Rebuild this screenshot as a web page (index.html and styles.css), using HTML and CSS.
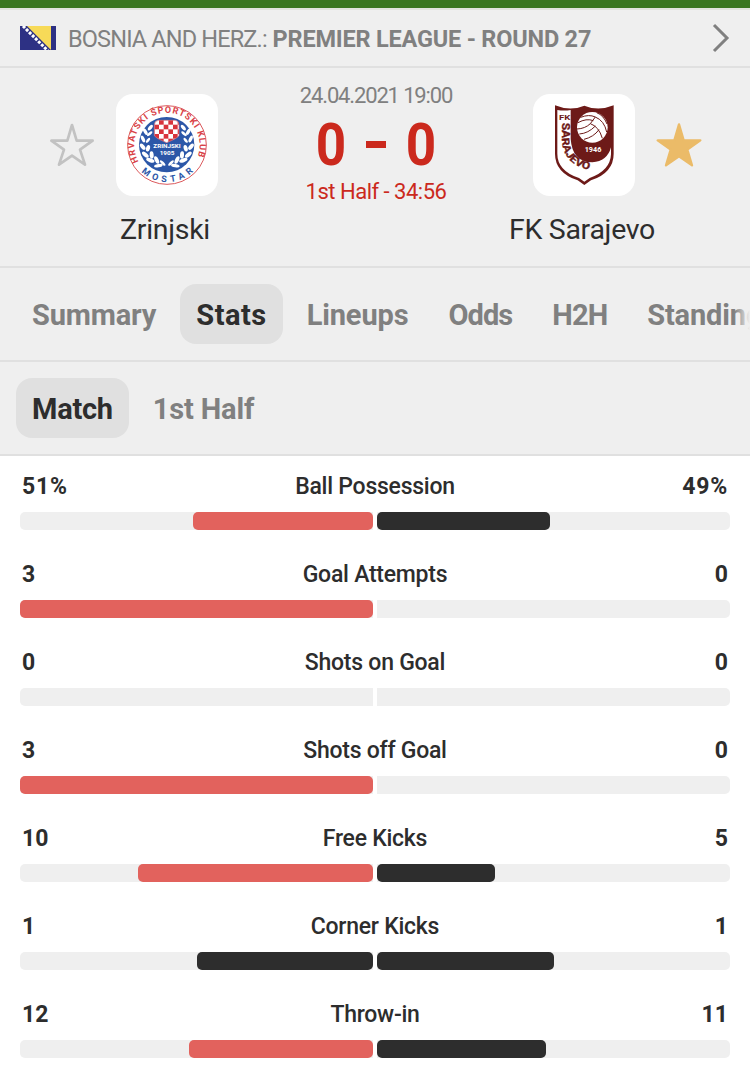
FILE: index.html
```html
<!DOCTYPE html>
<html lang="en">
  <head>
    <meta charset="UTF-8" />
    <meta name="viewport" content="width=device-width, initial-scale=1.0" />
    <title>Zrinjski - FK Sarajevo</title>
    <link rel="stylesheet" href="styles.css">
  </head>
  <body>
    <div class="top-line"></div>

    <header class="league">
      <svg class="flag" viewBox="0 0 36 24">
        <rect width="36" height="24" fill="#2d3184" />
        <path d="M7 0H31V24Z" fill="#f7da58" />
        <path d="M3 0L28 25" stroke="#fff" stroke-width="3" stroke-dasharray="2.9 1.4" />
      </svg>
      <div class="league-name">
        <span class="country">BOSNIA AND HERZ.:</span>
        <span class="round">PREMIER LEAGUE - ROUND 27</span>
      </div>
      <svg class="arrow" viewBox="0 0 18 30">
        <path d="M2 2L15 15L2 28" />
      </svg>
    </header>

    <section class="match">
      <svg class="star" viewBox="0 0 210 210">
        <path d="M96 45L110 92L158 92L120 119L135 164L96 137L57 164L72 119L34 92L82 92Z" />
      </svg>

      <div class="team">
        <div class="crest">
          <svg viewBox="18 18 306 306">
            <defs>
              <path id="ringTop" d="M86 221A98 98 0 1 1 256 221" />
              <path id="ringBottom" d="M91 249A112 112 0 0 0 251 249" />
              <pattern id="checks" x="133" y="110" width="28" height="28" patternUnits="userSpaceOnUse">
                <rect width="28" height="28" fill="#fff" />
                <rect width="14" height="14" fill="#d8333b" />
                <rect x="14" y="14" width="14" height="14" fill="#d8333b" />
              </pattern>
            </defs>
            <circle cx="171" cy="171" r="118" fill="#fff" stroke="#dc5a5d" stroke-width="3" />
            <circle cx="170" cy="170" r="83" fill="#2c57a8" />
            <g fill="#fff">
              <ellipse cx="121" cy="119" rx="5" ry="10" transform="rotate(40 121 119)" />
              <ellipse cx="106" cy="131" rx="5" ry="11" transform="rotate(-30 106 131)" />
              <ellipse cx="119" cy="137" rx="4" ry="10" transform="rotate(50 119 137)" />
              <ellipse cx="99" cy="153" rx="5" ry="11" transform="rotate(-25 99 153)" />
              <ellipse cx="114" cy="157" rx="4" ry="9" transform="rotate(40 114 157)" />
              <ellipse cx="98" cy="176" rx="6" ry="11" transform="rotate(-40 98 176)" />
              <ellipse cx="114" cy="181" rx="6" ry="10" transform="rotate(15 114 181)" />
              <ellipse cx="106" cy="200" rx="6" ry="12" transform="rotate(-50 106 200)" />
              <ellipse cx="125" cy="201" rx="6" ry="11" transform="rotate(-5 125 201)" />
              <ellipse cx="121" cy="217" rx="6" ry="13" transform="rotate(-70 121 217)" />
              <ellipse cx="140" cy="216" rx="6" ry="12" transform="rotate(-25 140 216)" />
              <ellipse cx="145" cy="233" rx="5" ry="13" transform="rotate(-100 145 233)" />
              <ellipse cx="158" cy="225" rx="4" ry="11" transform="rotate(-45 158 225)" />
              <ellipse cx="220" cy="119" rx="5" ry="10" transform="rotate(-40 220 119)" />
              <ellipse cx="235" cy="131" rx="5" ry="11" transform="rotate(30 235 131)" />
              <ellipse cx="222" cy="137" rx="4" ry="10" transform="rotate(-50 222 137)" />
              <ellipse cx="242" cy="153" rx="5" ry="11" transform="rotate(25 242 153)" />
              <ellipse cx="227" cy="157" rx="4" ry="9" transform="rotate(-40 227 157)" />
              <ellipse cx="243" cy="176" rx="6" ry="11" transform="rotate(40 243 176)" />
              <ellipse cx="227" cy="181" rx="6" ry="10" transform="rotate(-15 227 181)" />
              <ellipse cx="235" cy="200" rx="6" ry="12" transform="rotate(50 235 200)" />
              <ellipse cx="216" cy="201" rx="6" ry="11" transform="rotate(5 216 201)" />
              <ellipse cx="220" cy="217" rx="6" ry="13" transform="rotate(70 220 217)" />
              <ellipse cx="201" cy="216" rx="6" ry="12" transform="rotate(25 201 216)" />
              <ellipse cx="196" cy="233" rx="5" ry="13" transform="rotate(100 196 233)" />
              <ellipse cx="183" cy="225" rx="4" ry="11" transform="rotate(45 183 225)" />
            </g>
            <path d="M133 110Q134 98 145 97H195Q206 98 207 110V142Q205 150 170 164Q135 150 133 142Z" fill="url(#checks)" stroke="#e5747a" stroke-width="2" />
            <rect x="126" y="165" width="92" height="18" fill="#2c57a8" />
            <text class="crest-name" x="171" y="180" textLength="82" lengthAdjust="spacingAndGlyphs">ZRINJSKI</text>
            <text class="crest-year" x="171" y="202" textLength="44" lengthAdjust="spacingAndGlyphs">1905</text>
            <text class="ring-text red"><textPath href="#ringTop" textLength="392">HRVATSKI ŠPORTSKI KLUB</textPath></text>
            <text class="ring-text blue"><textPath href="#ringBottom" startOffset="4" textLength="172">MOSTAR</textPath></text>
          </svg>
        </div>
        <div class="team-name">Zrinjski</div>
      </div>

      <div class="score-box">
        <div class="date">24.04.2021 19:00</div>
        <div class="score"><span>0</span><i></i><span>0</span></div>
        <div class="status">1st Half - 34:56</div>
      </div>

      <div class="team">
        <div class="crest">
          <svg viewBox="18 18 306 306">
            <defs>
              <path id="curve" d="M105 104V154Q108 238 208 249" />
            </defs>
            <path d="M84 52Q130 71 172 53Q214 71 260 52V197Q260 254 192 277L172 291L152 277Q84 254 84 197Z" fill="#6d1a18" />
            <path d="M91 66Q112 69 131 66V153Q136 223 196 223Q241 220 252 178V199Q250 248 188 270L172 281L156 270Q91 248 91 197Z" fill="#fff" />
            <circle cx="196" cy="118" r="46" fill="#fff" />
            <g fill="none" stroke="#6d1a18" stroke-width="3">
              <path d="M161 88Q186 78 205 87M153 104Q178 90 199 98" />
              <path d="M205 87Q232 98 239 132M190 107Q216 116 226 151M205 87L190 107" />
              <path d="M150 123Q174 122 190 107M157 138Q184 136 205 114M171 154Q200 147 216 125" />
              <path d="M209 74Q230 82 240 108" />
            </g>
            <text class="fk" x="96" y="95" textLength="34" lengthAdjust="spacingAndGlyphs">FK</text>
            <text class="sarajevo"><textPath href="#curve" textLength="184" lengthAdjust="spacingAndGlyphs">SARAJEVO</textPath></text>
            <text class="year" x="198" y="191" textLength="50" lengthAdjust="spacingAndGlyphs">1946</text>
          </svg>
        </div>
        <div class="team-name">FK Sarajevo</div>
      </div>

      <svg class="star active" viewBox="0 0 210 210">
        <path d="M99 43L113 91L163 91L124 119L138 166L99 139L60 166L74 119L35 91L85 91Z" />
      </svg>
    </section>

    <nav class="tabs main-tabs">
      <a class="tab">Summary</a>
      <a class="tab selected">Stats</a>
      <a class="tab">Lineups</a>
      <a class="tab narrow">Odds</a>
      <a class="tab narrow">H2H</a>
      <a class="tab">Standings</a>
    </nav>

    <nav class="tabs sub-tabs">
      <a class="tab selected">Match</a>
      <a class="tab">1st Half</a>
    </nav>

    <main class="stats">
      <div class="stat">
        <div class="values percent"><b>51%</b><span>Ball Possession</span><b>49%</b></div>
        <div class="bars">
          <div class="bar home"><div class="fill red" style="width: 51%"></div></div>
          <div class="bar"><div class="fill" style="width: 49%"></div></div>
        </div>
      </div>

      <div class="stat">
        <div class="values"><b>3</b><span>Goal Attempts</span><b>0</b></div>
        <div class="bars">
          <div class="bar home"><div class="fill red" style="width: 100%"></div></div>
          <div class="bar"></div>
        </div>
      </div>

      <div class="stat">
        <div class="values"><b>0</b><span>Shots on Goal</span><b>0</b></div>
        <div class="bars">
          <div class="bar home"></div>
          <div class="bar"></div>
        </div>
      </div>

      <div class="stat">
        <div class="values"><b>3</b><span>Shots off Goal</span><b>0</b></div>
        <div class="bars">
          <div class="bar home"><div class="fill red" style="width: 100%"></div></div>
          <div class="bar"></div>
        </div>
      </div>

      <div class="stat">
        <div class="values"><b>10</b><span>Free Kicks</span><b>5</b></div>
        <div class="bars">
          <div class="bar home"><div class="fill red" style="width: 66.67%"></div></div>
          <div class="bar"><div class="fill" style="width: 33.33%"></div></div>
        </div>
      </div>

      <div class="stat">
        <div class="values"><b>1</b><span>Corner Kicks</span><b>1</b></div>
        <div class="bars">
          <div class="bar home"><div class="fill" style="width: 50%"></div></div>
          <div class="bar"><div class="fill" style="width: 50%"></div></div>
        </div>
      </div>

      <div class="stat">
        <div class="values"><b>12</b><span>Throw-in</span><b>11</b></div>
        <div class="bars">
          <div class="bar home"><div class="fill red" style="width: 52.17%"></div></div>
          <div class="bar"><div class="fill" style="width: 47.83%"></div></div>
        </div>
      </div>
    </main>
  </body>
</html>
```

FILE: styles.css
```css
* {
  box-sizing: border-box;
}

body {
  margin: 0;
  height: 1092px;
  overflow: hidden;
  background-color: #ffffff;
  color: #2d2d2d;
  font-family: Roboto, "Liberation Sans", sans-serif;
}

.top-line {
  height: 8px;
  background-color: #3a7620;
}

.league {
  display: flex;
  align-items: center;
  height: 60px;
  padding: 0 20px;
  background-color: #efefef;
  border-top: 2px solid #e2e3de;
  border-bottom: 2px solid #e0e0e0;
}

.flag {
  width: 36px;
  height: 24px;
}

.league-name {
  flex: 1;
  padding-top: 2px;
  margin-left: 12px;
  font-size: 23.5px;
  color: #808080;
  white-space: nowrap;
}

.country {
  letter-spacing: -0.85px;
}

.round {
  font-weight: bold;
  letter-spacing: -0.2px;
}

.arrow {
  width: 18px;
  height: 30px;
}

.arrow path {
  fill: none;
  stroke: #808080;
  stroke-width: 3;
}

.match {
  display: grid;
  grid-template-columns: 64px 126px 1fr 124px 64px;
  height: 200px;
  padding: 26px 40px 0;
  background-color: #efefef;
  border-bottom: 2px solid #e0e0e0;
}

.star {
  width: 70px;
  height: 70px;
  margin-top: 16px;
}

.star path {
  fill: none;
  stroke: #c2c2c2;
  stroke-width: 8;
  stroke-linejoin: round;
}

.star.active path {
  fill: #ebbb68;
  stroke: #ebbb68;
  stroke-width: 7;
}

.team {
  display: flex;
  flex-direction: column;
  align-items: center;
}

.crest {
  width: 102px;
  height: 102px;
  background-color: #ffffff;
  border-radius: 17px;
}

.crest svg {
  display: block;
  width: 102px;
  height: 102px;
}

.crest text {
  font-weight: bold;
}

.crest-name,
.crest-year,
.year {
  fill: #fff;
  text-anchor: middle;
}

.crest-name,
.crest-year {
  font-size: 16px;
}

.ring-text {
  font-size: 27px;
}

.ring-text.red {
  fill: #d94247;
}

.ring-text.blue {
  fill: #2c57a8;
}

.fk {
  font-size: 24px;
  fill: #6d1a18;
}

.sarajevo {
  font-size: 31px;
  fill: #6d1a18;
  stroke: #6d1a18;
  stroke-width: 1;
}

.year {
  font-size: 20px;
}

.team-name {
  margin-top: 17px;
  margin-right: 4px;
  font-size: 28.5px;
  line-height: 34px;
  letter-spacing: -0.3px;
  white-space: nowrap;
}

.score-box {
  display: flex;
  flex-direction: column;
  align-items: center;
}

.date {
  margin-top: -12px;
  font-size: 22px;
  line-height: 28px;
  letter-spacing: -1.15px;
  color: #808080;
}

.score {
  display: flex;
  align-items: center;
  gap: 18px;
  height: 44px;
  margin-top: 12px;
  font-size: 59px;
  font-weight: bold;
  color: #cb291d;
}

.score span {
  transform: scaleX(0.9);
}

.score i {
  width: 20px;
  height: 7px;
  background-color: #cb291d;
}

.status {
  margin-top: 12px;
  font-size: 22px;
  line-height: 28px;
  letter-spacing: -0.5px;
  color: #cb291d;
}

.tabs {
  position: relative;
  display: flex;
  align-items: center;
  gap: 8px;
  height: 94px;
  padding-left: 16px;
  overflow: hidden;
  background-color: #efefef;
  border-bottom: 2px solid #e0e0e0;
}

/* fade over the tab that scrolls out */
.main-tabs::after {
  content: "";
  position: absolute;
  top: 0;
  right: 0;
  width: 16px;
  height: 92px;
  background: linear-gradient(to right, rgba(239, 239, 239, 0), #efefef);
}

.tab {
  flex: none;
  height: 60px;
  padding: 1px 16px 0;
  border-radius: 16px;
  font-size: 29px;
  font-weight: bold;
  line-height: 60px;
  letter-spacing: -0.15px;
  color: #808080;
}

.tab.narrow {
  letter-spacing: -0.9px;
}

.tab.selected {
  background-color: #e0e0e0;
  letter-spacing: 0.5px;
  color: #2d2d2d;
}

.sub-tabs .tab.selected {
  letter-spacing: -0.25px;
}

.stats {
  padding: 13px 20px 0;
}

.stat {
  height: 88px;
}

.values {
  display: grid;
  grid-template-columns: 1fr auto 1fr;
  padding: 0 2px;
  font-size: 23px;
  line-height: 36px;
}

.values span {
  font-weight: 500;
  letter-spacing: -0.25px;
}

.values.percent b {
  letter-spacing: 0.8px;
}

.values b:last-child {
  text-align: right;
}

.bars {
  display: flex;
  gap: 4px;
  margin-top: 7px;
}

.bar {
  flex: 1;
  display: flex;
  height: 18px;
  border-radius: 0 5px 5px 0;
  background-color: #efefef;
}

.bar.home {
  justify-content: flex-end;
  border-radius: 5px 0 0 5px;
}

.fill {
  border-radius: 5px;
  background-color: #2d2d2d;
}

.fill.red {
  background-color: #e2625d;
}
```
